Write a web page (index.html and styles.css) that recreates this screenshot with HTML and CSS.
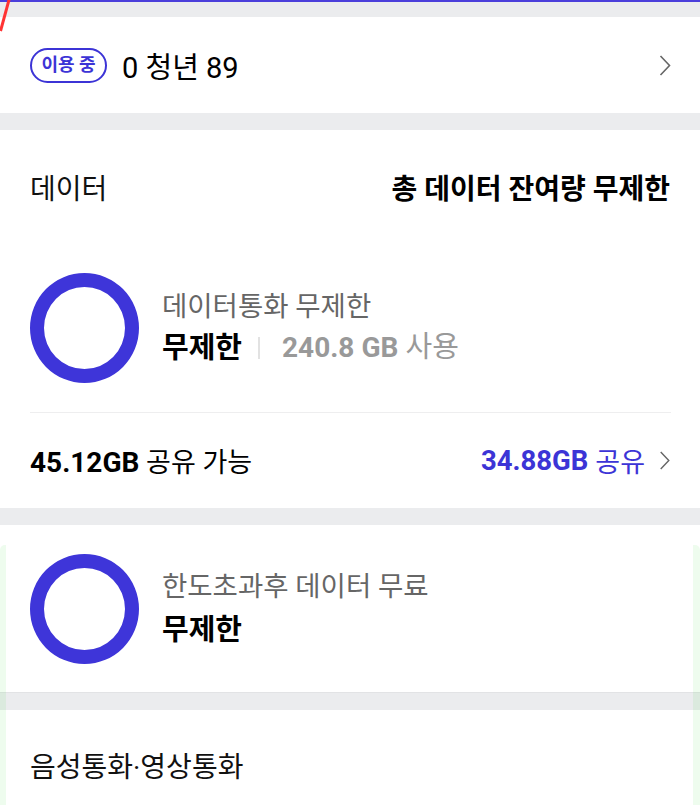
FILE: index.html
```html
<!DOCTYPE html>
<html lang="ko">
<head>
<meta charset="utf-8">
<title>요금제</title>
<link rel="stylesheet" href="styles.css">
</head>
<body>
<div class="page">
  <div class="topline"></div>
  <div class="gap gap-first"></div>

  <section class="card plan">
    <div class="plan-left">
      <span class="badge">이용 중</span>
      <span class="plan-name">0 청년 89</span>
    </div>
    <svg class="chev" viewBox="0 0 12 21" width="12" height="21"><polyline points="1.5,1 10.5,10.5 1.5,20" fill="none" stroke="#666" stroke-width="1.6"/></svg>
  </section>

  <div class="gap"></div>

  <section class="card data">
    <div class="data-head">
      <span class="head-title">데이터</span>
      <span class="head-total">총 데이터 잔여량 무제한</span>
    </div>
    <div class="usage">
      <div class="ring"></div>
      <div class="usage-text">
        <div class="usage-label">데이터통화 무제한</div>
        <div class="usage-value"><span class="strong">무제한</span><span class="sep"></span><span class="used"><b>240.8 GB</b> 사용</span></div>
      </div>
    </div>
    <div class="divider"></div>
    <div class="share">
      <span class="share-avail"><b>45.12GB</b> 공유 가능</span>
      <span class="share-link"><b>34.88GB</b> 공유<svg class="chev" viewBox="0 0 12 20" width="12" height="19"><polyline points="1.5,1 10,10 1.5,19" fill="none" stroke="#666" stroke-width="1.5"/></svg></span>
    </div>
  </section>

  <div class="gap"></div>

  <section class="card extra">
    <div class="usage">
      <div class="ring"></div>
      <div class="usage-text usage-text-wide">
        <div class="usage-label">한도초과후 데이터 무료</div>
        <div class="usage-value"><span class="strong">무제한</span></div>
      </div>
    </div>
  </section>

  <div class="gap gap-shadow"></div>

  <section class="card voice">
    <span class="head-title">음성통화·영상통화</span>
  </section>

  <div class="overlay"></div>
  <svg class="redmark" viewBox="0 0 12 32" width="12" height="32"><line x1="9.5" y1="-2" x2="0.5" y2="31" stroke="#ff3333" stroke-width="3"/></svg>
</div>
</body>
</html>
```

FILE: styles.css
```css
html, body {
  margin: 0;
  padding: 0;
  background: #ebecee;
}

body {
  font-family: Roboto, "Noto Sans CJK KR", sans-serif;
  color: #111;
}

.page {
  position: relative;
  width: 700px;
  height: 805px;
  overflow: hidden;
  background: #ebecee;
}

.topline {
  height: 2px;
  background: #4b3fdb;
}

.gap {
  height: 17px;
  background: #ebecee;
}

.gap-first {
  height: 15px;
}

.gap-shadow {
  height: 18px;
  border-top: 1px solid #e2e3e5;
  box-sizing: border-box;
}

.card {
  background: #fff;
  padding: 0 29px 0 30px;
}

/* plan card */
.plan {
  height: 96px;
  display: flex;
  align-items: center;
  justify-content: space-between;
}

.plan-left {
  display: flex;
  align-items: center;
  gap: 15px;
}

.badge {
  box-sizing: border-box;
  height: 35px;
  width: 77px;
  border: 2.5px solid #3c34d6;
  border-radius: 18px;
  color: #3c34d6;
  font-weight: 700;
  font-size: 18px;
  display: flex;
  align-items: center;
  justify-content: center;
  line-height: 1;
}

.plan-name {
  font-size: 29px;
  color: #000;
}

.chev {
  display: block;
  flex: none;
}

/* data card */
.data {
  height: 378px;
  display: flex;
  flex-direction: column;
}

.data-head {
  height: 114px;
  display: flex;
  align-items: center;
  justify-content: space-between;
}

.head-title {
  font-size: 28px;
  color: #111;
}

.head-total {
  font-size: 28px;
  font-weight: 700;
  color: #000;
  margin-right: 1px;
}

.usage {
  display: flex;
  align-items: center;
  gap: 23px;
}

.data .usage {
  margin-top: 29px;
}

.ring {
  box-sizing: border-box;
  width: 109px;
  height: 110px;
  border: 14.5px solid #3e35d9;
  border-radius: 50%;
  flex: none;
}

.usage-text {
  display: flex;
  flex-direction: column;
  gap: 1px;
}

.usage-label {
  font-size: 27.5px;
  line-height: 38px;
  color: #666;
}

.usage-value {
  display: flex;
  align-items: center;
  line-height: 40px;
}

.strong {
  font-size: 29px;
  font-weight: 700;
  color: #000;
}

.sep {
  width: 2px;
  height: 22px;
  background: #e2e2e2;
  margin: 0 22px 0 16px;
}

.used {
  font-size: 29px;
  color: #999;
}

.used b {
  font-size: 28px;
  font-weight: 700;
}

.divider {
  height: 1px;
  background: #eeeeef;
  margin-top: 29px;
}

.share {
  flex: 1;
  display: flex;
  align-items: center;
  justify-content: space-between;
  font-size: 27px;
}

.share b {
  font-size: 28px;
  font-weight: 700;
}

.share-avail {
  color: #000;
}

.share-link {
  color: #3c34d6;
  display: flex;
  align-items: center;
  gap: 14px;
}

.share-link b {
  font-size: 27.5px;
  margin-right: -7px;
}

/* extra card */
.extra {
  height: 167px;
  display: flex;
  align-items: center;
}

.usage-text-wide {
  gap: 4px;
}

/* voice card */
.voice {
  height: 110px;
  display: flex;
  align-items: center;
}

/* overlays */
.overlay {
  position: absolute;
  left: 0;
  right: 0;
  top: 545px;
  bottom: 0;
  border-left: 6px solid rgba(40, 220, 40, 0.08);
  border-right: 7px solid rgba(40, 220, 40, 0.08);
  border-radius: 5px 5px 0 0;
  pointer-events: none;
}

.redmark {
  position: absolute;
  left: 0;
  top: 0;
}
```
